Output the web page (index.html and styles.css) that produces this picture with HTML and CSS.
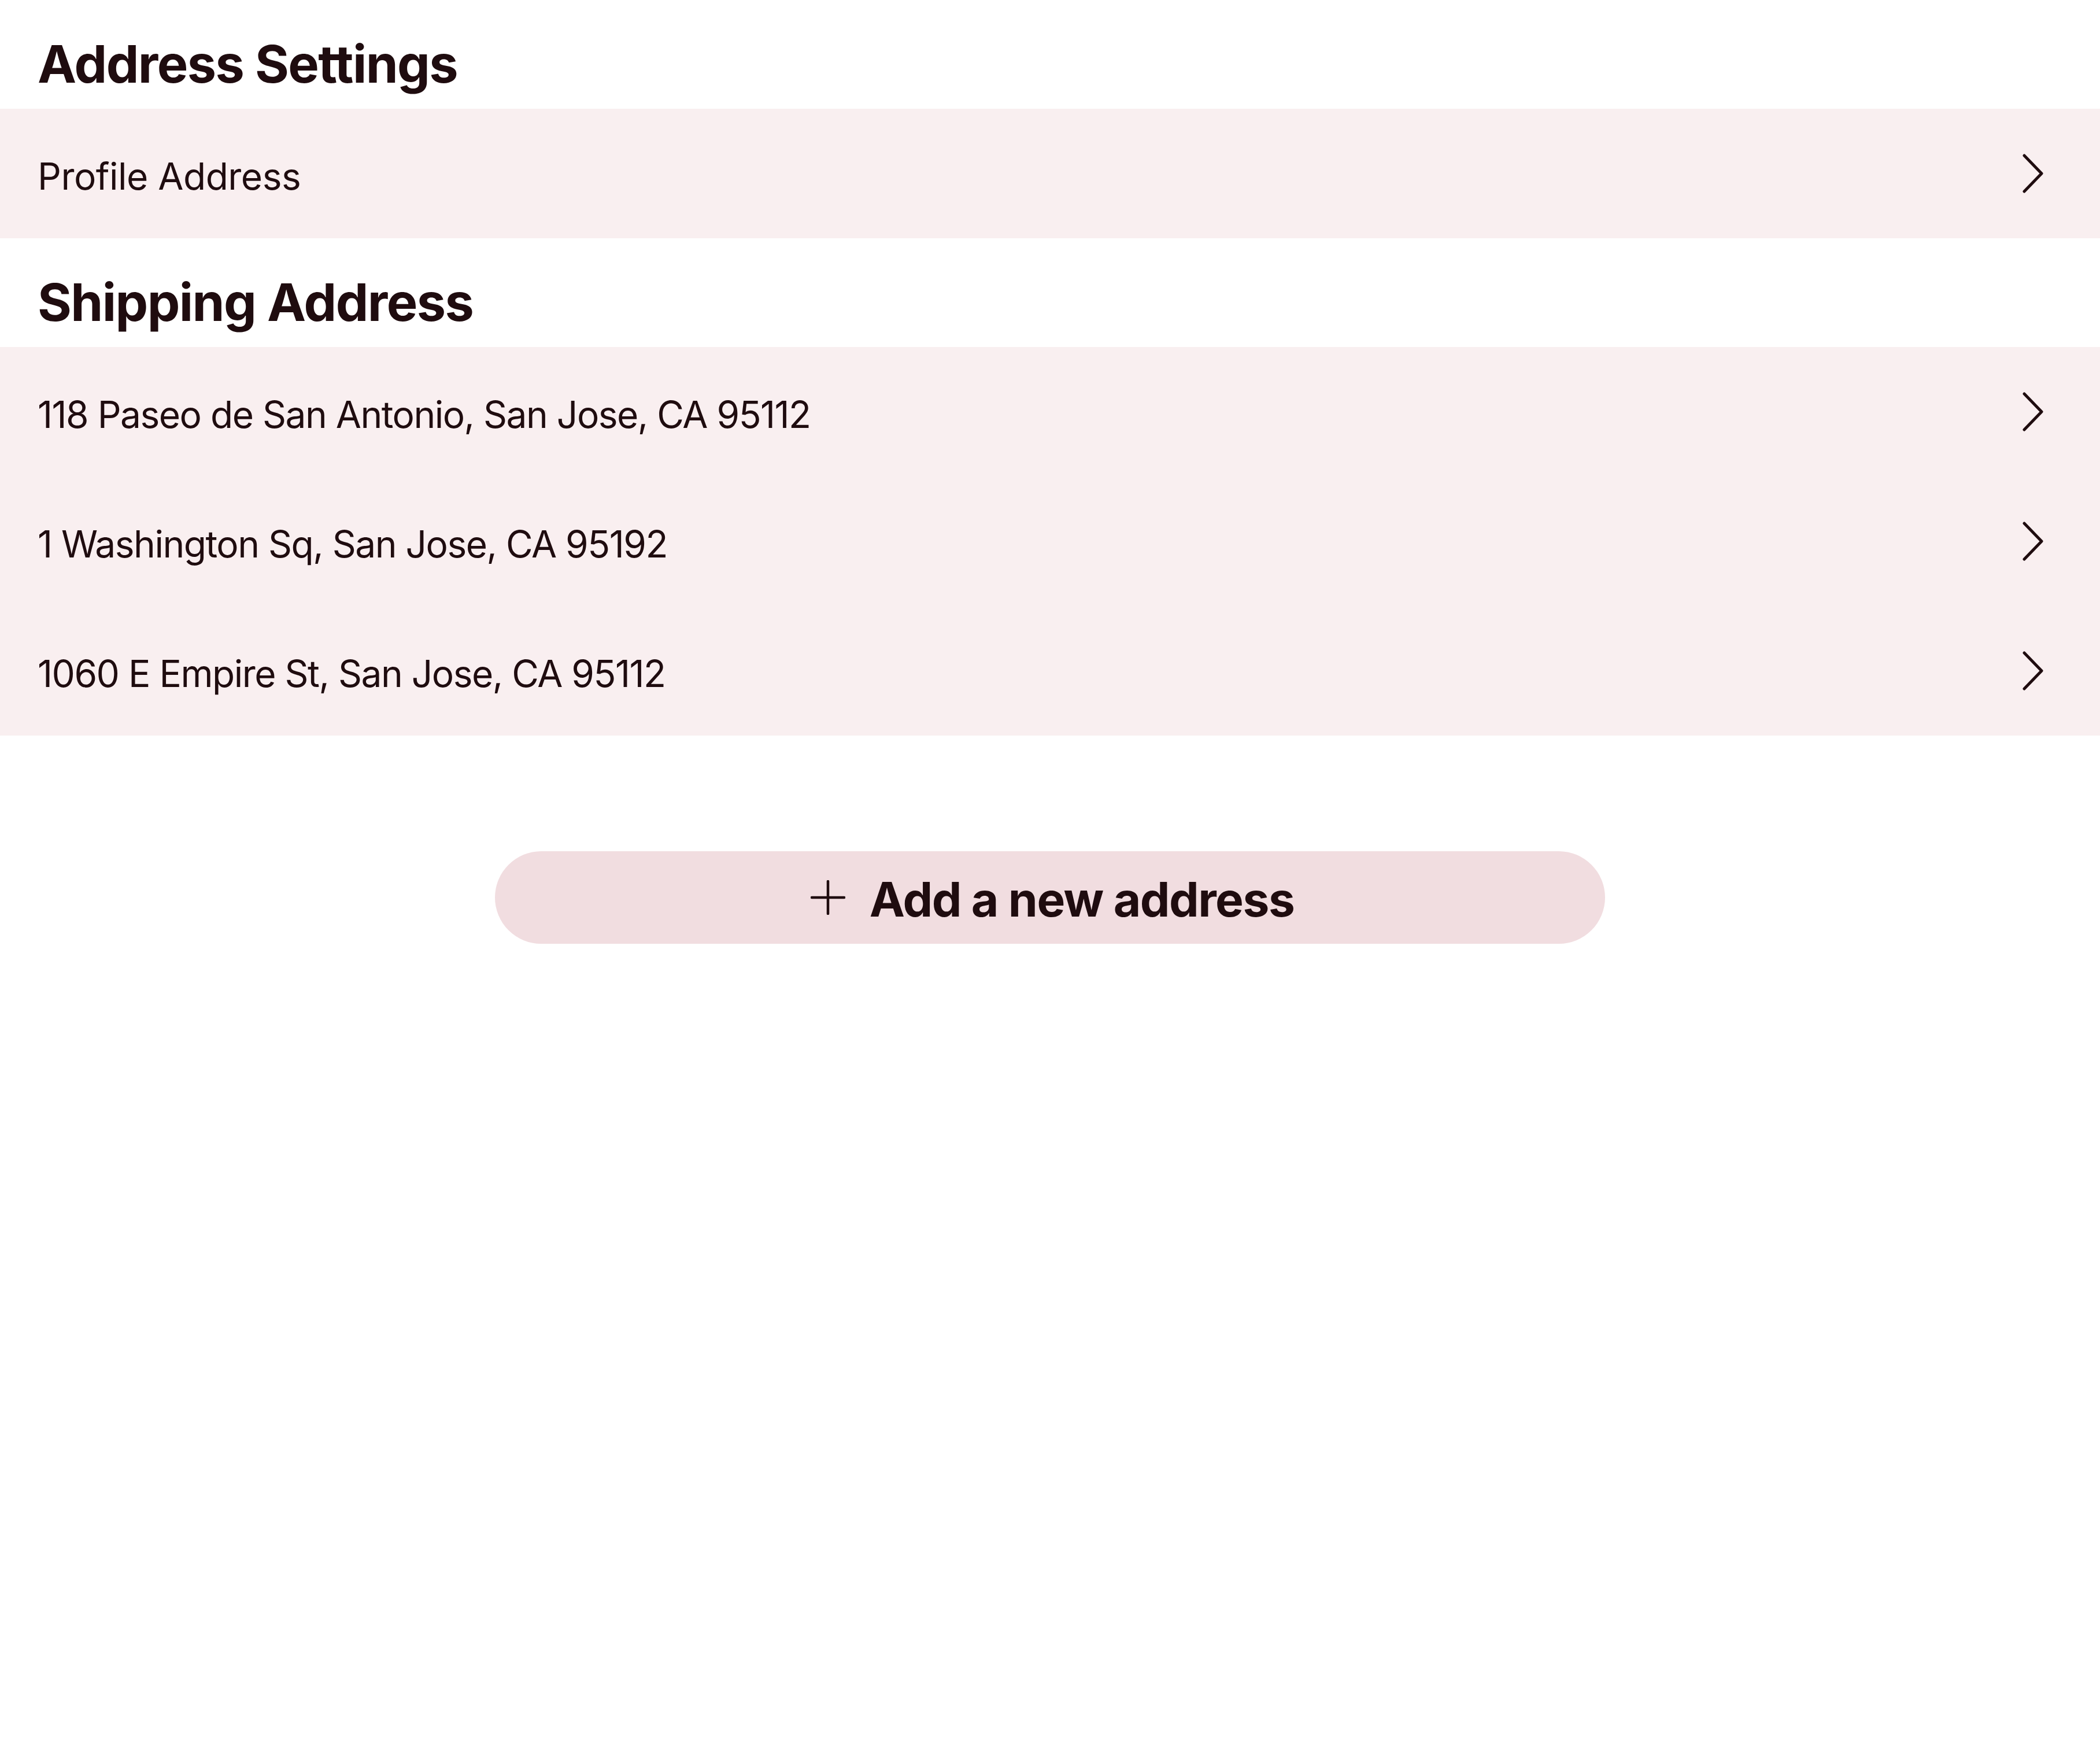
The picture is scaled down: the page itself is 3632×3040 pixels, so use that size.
FILE: index.html
```html
<!DOCTYPE html>
<html lang="en">
<head>
<meta charset="utf-8">
<title>Address Settings</title>
<link rel="stylesheet" href="styles.css">
</head>
<body>
<main class="page">
  <section class="section">
    <h2 class="section-title">Address Settings</h2>
    <ul class="list">
      <li class="row"><span class="row-label row-label-wide">Profile Address</span>
        <svg class="chev" viewBox="0 0 36 68" width="36" height="68"><polyline points="3,3 33,34 3,65"/></svg></li>
    </ul>
  </section>
  <section class="section">
    <h2 class="section-title">Shipping Address</h2>
    <ul class="list">
      <li class="row"><span class="row-label">118 Paseo de San Antonio, San Jose, CA 95112</span>
        <svg class="chev" viewBox="0 0 36 68" width="36" height="68"><polyline points="3,3 33,34 3,65"/></svg></li>
      <li class="row"><span class="row-label">1 Washington Sq, San Jose, CA 95192</span>
        <svg class="chev" viewBox="0 0 36 68" width="36" height="68"><polyline points="3,3 33,34 3,65"/></svg></li>
      <li class="row"><span class="row-label">1060 E Empire St, San Jose, CA 95112</span>
        <svg class="chev" viewBox="0 0 36 68" width="36" height="68"><polyline points="3,3 33,34 3,65"/></svg></li>
    </ul>
  </section>
  <div class="actions">
    <button class="add-btn" type="button">
      <svg class="plus" viewBox="0 0 60 60" width="60" height="60"><path d="M30 2 V58 M2 30 H58"/></svg>
      <span class="add-label">Add a new address</span>
    </button>
  </div>
</main>
</body>
</html>
```

FILE: styles.css
```css
* { box-sizing: border-box; }

html, body {
  margin: 0;
  padding: 0;
  background: #ffffff;
}

body {
  font-family: "Inter", "Liberation Sans", sans-serif;
  color: #1f0c0f;
}

.page {
  display: flex;
  flex-direction: column;
}

.section-title {
  margin: 0;
  padding: 66px 65px 32px;
  font-size: 90px;
  line-height: 90px;
  font-weight: 700;
  letter-spacing: -1.6px;
  color: #1f0c0f;
}

.list {
  list-style: none;
  margin: 0;
  padding: 0;
  background: #f9eff0;
}

.row {
  height: 224px;
  display: flex;
  align-items: center;
  justify-content: space-between;
  padding: 0 98px 0 65px;
}

.row-label {
  font-size: 64px;
  line-height: 64px;
  font-weight: 400;
  letter-spacing: -1.5px;
  padding-top: 9px;
}

.row-label-wide {
  letter-spacing: -0.5px;
}

.chev {
  display: block;
  fill: none;
  stroke: #1f0c0f;
  stroke-width: 5;
  stroke-linecap: round;
  stroke-linejoin: round;
}

.actions {
  display: flex;
  justify-content: center;
  padding-top: 200px;
}

.add-btn {
  width: 1920px;
  height: 160px;
  border: 0;
  border-radius: 80px;
  background: #f1dde0;
  display: flex;
  align-items: center;
  justify-content: center;
  gap: 42px;
  padding: 0 0 0 8px;
  font-family: inherit;
  color: #1f0c0f;
  cursor: pointer;
}

.plus {
  display: block;
  fill: none;
  stroke: #1f0c0f;
  stroke-width: 4.5;
  stroke-linecap: round;
}

.add-label {
  font-size: 82px;
  line-height: 82px;
  font-weight: 700;
  letter-spacing: -1.5px;
  padding-top: 8px;
}
```
